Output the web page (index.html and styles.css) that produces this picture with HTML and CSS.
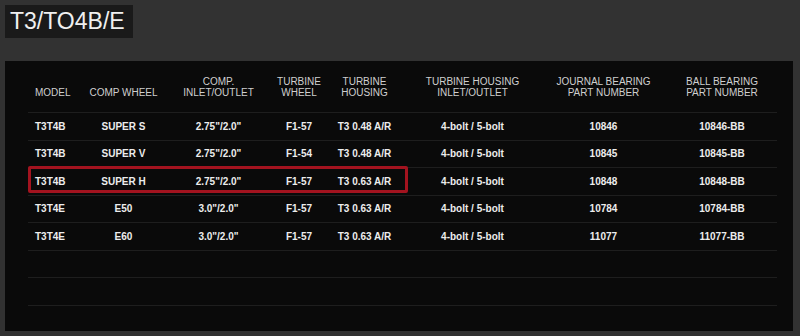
FILE: index.html
```html
<!DOCTYPE html>
<html>
<head>
<meta charset="utf-8">
<link rel="stylesheet" href="styles.css">
</head>
<body>
<div class="title">T3/TO4B/E</div>
<div class="panel">
  <div class="table-wrap">
    <table class="spec">
      <colgroup>
        <col class="c1"><col class="c2"><col class="c3"><col class="c4"><col class="c5"><col class="c6"><col class="c7"><col class="c8">
      </colgroup>
      <thead>
        <tr>
          <th class="left">MODEL</th>
          <th>COMP WHEEL</th>
          <th>COMP.<br>INLET/OUTLET</th>
          <th>TURBINE<br>WHEEL</th>
          <th>TURBINE<br>HOUSING</th>
          <th>TURBINE HOUSING<br>INLET/OUTLET</th>
          <th>JOURNAL BEARING<br>PART NUMBER</th>
          <th>BALL BEARING<br>PART NUMBER</th>
        </tr>
      </thead>
      <tbody>
        <tr><td class="left">T3T4B</td><td>SUPER S</td><td>2.75"/2.0"</td><td>F1-57</td><td>T3 0.48 A/R</td><td>4-bolt / 5-bolt</td><td>10846</td><td>10846-BB</td></tr>
        <tr><td class="left">T3T4B</td><td>SUPER V</td><td>2.75"/2.0"</td><td>F1-54</td><td>T3 0.48 A/R</td><td>4-bolt / 5-bolt</td><td>10845</td><td>10845-BB</td></tr>
        <tr><td class="left">T3T4B</td><td>SUPER H</td><td>2.75"/2.0"</td><td>F1-57</td><td>T3 0.63 A/R</td><td>4-bolt / 5-bolt</td><td>10848</td><td>10848-BB</td></tr>
        <tr><td class="left">T3T4E</td><td>E50</td><td>3.0"/2.0"</td><td>F1-57</td><td>T3 0.63 A/R</td><td>4-bolt / 5-bolt</td><td>10784</td><td>10784-BB</td></tr>
        <tr><td class="left">T3T4E</td><td>E60</td><td>3.0"/2.0"</td><td>F1-57</td><td>T3 0.63 A/R</td><td>4-bolt / 5-bolt</td><td>11077</td><td>11077-BB</td></tr>
        <tr class="empty"><td colspan="8"></td></tr>
        <tr class="empty"><td colspan="8"></td></tr>
      </tbody>
    </table>
    <div class="highlight"></div>
  </div>
</div>
</body>
</html>
```

FILE: styles.css
```css
html, body {
  margin: 0;
  padding: 0;
}
body {
  background: #323232;
  width: 800px;
  height: 336px;
  overflow: hidden;
  padding: 5px 0 0 5px;
  box-sizing: border-box;
  font-family: "Liberation Sans", Arial, sans-serif;
}
.title {
  display: inline-block;
  background: #1a1a1a;
  color: #f0f0f0;
  font-size: 23px;
  line-height: 33px;
  height: 33px;
  padding: 0 9px 0 5px;
  width: 114px;
}
.panel {
  margin-top: 23px;
  width: 788px;
  height: 270px;
  background: #0a0a0a;
  box-sizing: border-box;
  padding: 15px 0 0 23px;
}
.table-wrap {
  position: relative;
  width: 749px;
}
.spec {
  width: 749px;
  border-collapse: collapse;
  table-layout: fixed;
  font-size: 10px;
}
.c1 { width: 56px; }
.c2 { width: 79px; }
.c3 { width: 111px; }
.c4 { width: 50px; }
.c5 { width: 81px; }
.c6 { width: 135px; }
.c7 { width: 127px; }
.c8 { width: 110px; }
.spec th {
  font-weight: normal;
  color: #cfcfcf;
  line-height: 11px;
  padding: 0 0 14px 0;
  vertical-align: bottom;
  text-align: center;
  white-space: nowrap;
  border-bottom: 1px solid #1e1e1e;
}
.spec td {
  font-weight: bold;
  color: #ededed;
  height: 26.5px;
  padding: 0;
  text-align: center;
  vertical-align: middle;
  white-space: nowrap;
  border-bottom: 1px solid #1e1e1e;
}
.spec .left {
  text-align: left;
  padding-left: 7px;
}
.spec .empty td {
  height: 26.5px;
}
.highlight {
  position: absolute;
  left: 0;
  top: 90px;
  width: 380px;
  height: 27px;
  box-sizing: border-box;
  border: 3px solid #a3131f;
  border-radius: 2px;
}
```
